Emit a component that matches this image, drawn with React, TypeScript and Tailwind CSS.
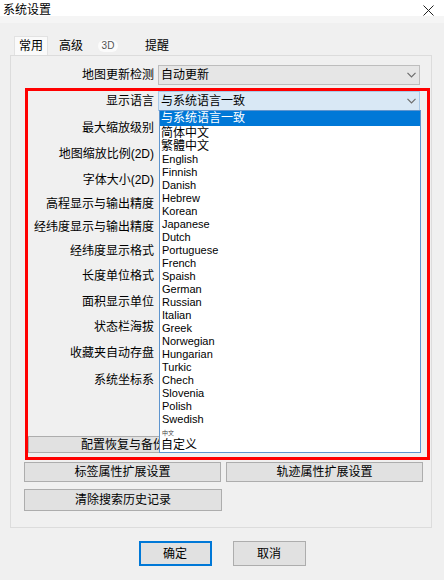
const FONT = "font-['Liberation_Sans','Noto_Sans_CJK_SC',sans-serif]";

const ROWS: { label: string; h: string; select?: "update" | "lang" }[] = [
  { label: "地图更新检测", h: "h-[26px]", select: "update" },
  { label: "显示语言", h: "h-[26px]", select: "lang" },
  { label: "最大缩放级别", h: "h-[27px]" },
  { label: "地图缩放比例(2D)", h: "h-[26px]" },
  { label: "字体大小(2D)", h: "h-[25px]" },
  { label: "高程显示与输出精度", h: "h-[23px]" },
  { label: "经纬度显示与输出精度", h: "h-[24px]" },
  { label: "经纬度显示格式", h: "h-[24px]" },
  { label: "长度单位格式", h: "h-[26px]" },
  { label: "面积显示单位", h: "h-[25px]" },
  { label: "状态栏海拔", h: "h-[26px]" },
  { label: "收藏夹自动存盘", h: "h-[25px]" },
  { label: "系统坐标系", h: "h-[29px]" },
];

const LANGS = [
  "English",
  "Finnish",
  "Danish",
  "Hebrew",
  "Korean",
  "Japanese",
  "Dutch",
  "Portuguese",
  "French",
  "Spaish",
  "German",
  "Russian",
  "Italian",
  "Greek",
  "Norwegian",
  "Hungarian",
  "Turkic",
  "Chech",
  "Slovenia",
  "Polish",
  "Swedish",
];

function Chevron() {
  return (
    <svg width="9" height="6" viewBox="0 0 9 6" className="mr-[3px]">
      <polyline points="0.5,0.8 4.5,4.8 8.5,0.8" fill="none" stroke="#6d6d6d" strokeWidth="1.2" />
    </svg>
  );
}

function LangList() {
  return (
    <div className="absolute left-0 top-full z-10 w-[262px] border border-[#5e95cf] bg-white text-black">
      <div className="flex h-[15px] items-center bg-[#0078d7] pl-[1px] text-[12px] leading-[13px] text-white">
        与系统语言一致
      </div>
      <div className="flex h-[14px] items-center pl-[1px] text-[12px] leading-[13px]">简体中文</div>
      <div className="flex h-[13px] items-center pl-[1px] text-[12px] leading-[13px]">繁體中文</div>
      {LANGS.map((l) => (
        <div key={l} className="flex h-[13px] items-center pl-[2px] text-[11px] leading-[13px]">
          {l}
        </div>
      ))}
      <div className="flex h-[13px] items-center pl-[2px] text-[6px] leading-[6px] text-[#444]">中文</div>
      <div className="flex h-[13px] items-center pl-[1px] text-[12px] leading-[13px]">自定义</div>
    </div>
  );
}

function Button({ children, className }: { children: React.ReactNode; className: string }) {
  return (
    <div
      className={`flex items-center justify-center border border-[#adadad] bg-[#e1e1e1] text-[12px] leading-[14px] text-black ${className}`}
    >
      {children}
    </div>
  );
}

export default function App() {
  return (
    <div className={`h-[580px] w-[444px] overflow-hidden bg-[#f0f0f0] text-black ${FONT}`}>
      {/* title bar */}
      <div className="flex h-[16px] items-start justify-between bg-white pl-[3px] pt-[3px] text-[12px] leading-[14px]">
        <span>系统设置</span>
        <svg width="11" height="11" viewBox="0 0 11 11" className="mr-[10px] mt-[2px]">
          <path d="M0.5 0.5 L10.5 10.5 M10.5 0.5 L0.5 10.5" stroke="#222" strokeWidth="1" />
        </svg>
      </div>
      <div className="h-[7px] bg-[#f5f5f5]" />

      {/* tabs */}
      <div className="mt-[13px] flex h-[19px] pl-[14px] text-[12px] leading-[14px]">
        <div className="flex w-[34px] items-center justify-center border border-b-0 border-[#e2e2e2] bg-[#fafafa]">
          常用
        </div>
        <div className="flex w-[46px] items-center justify-center">高级</div>
        <div className="flex w-[28px] items-center justify-center">
          <span className="rounded-full bg-[#fbfbfb] px-[4px] text-[10px] leading-[12px] text-[#555]">3D</span>
        </div>
        <div className="flex w-[70px] items-center justify-center">提醒</div>
      </div>

      {/* panel */}
      <div className="relative ml-[10px] h-[473px] w-[422px] border border-[#dcdcdc] bg-[#f0f0f0] pt-[6px]">
        {ROWS.map((r) => (
          <div key={r.label} className={`flex items-center ${r.h}`}>
            <div className="w-[143px] whitespace-nowrap text-right text-[12px] leading-[14px]">{r.label}</div>
            {r.select === "update" && (
              <div className="ml-[4px] flex h-[20px] w-[262px] items-center justify-between border border-[#bdbdbd] bg-[#e6e6e6] pl-[2px] text-[12px] leading-[14px]">
                <span>自动更新</span>
                <Chevron />
              </div>
            )}
            {r.select === "lang" && (
              <div className="relative ml-[4px] flex h-[20px] w-[262px] items-center justify-between border border-[#a9c9e8] bg-[#d9e8f5] pl-[2px] text-[12px] leading-[14px]">
                <span>与系统语言一致</span>
                <Chevron />
                <LangList />
              </div>
            )}
          </div>
        ))}

        <Button className="ml-[17px] mt-[42px] h-[17px] w-[190px]">配置恢复与备份</Button>

        <div className="ml-[13px] mt-[9px] flex gap-[5px]">
          <Button className="h-[20px] w-[197px]">标签属性扩展设置</Button>
          <Button className="h-[20px] w-[197px]">轨迹属性扩展设置</Button>
        </div>
        <Button className="ml-[13px] mt-[7px] h-[22px] w-[198px]">清除搜索历史记录</Button>

        {/* red annotation frame */}
        <div className="pointer-events-none absolute left-[14px] top-[32px] z-20 h-[372px] w-[405px] border-[3px] border-[#ff0000]" />
      </div>

      {/* dialog buttons */}
      <div className="mt-[13px] flex justify-center gap-[21px]">
        <Button className="h-[25px] w-[73px] !border-2 !border-[#0078d7]">确定</Button>
        <Button className="h-[25px] w-[73px]">取消</Button>
      </div>
    </div>
  );
}
